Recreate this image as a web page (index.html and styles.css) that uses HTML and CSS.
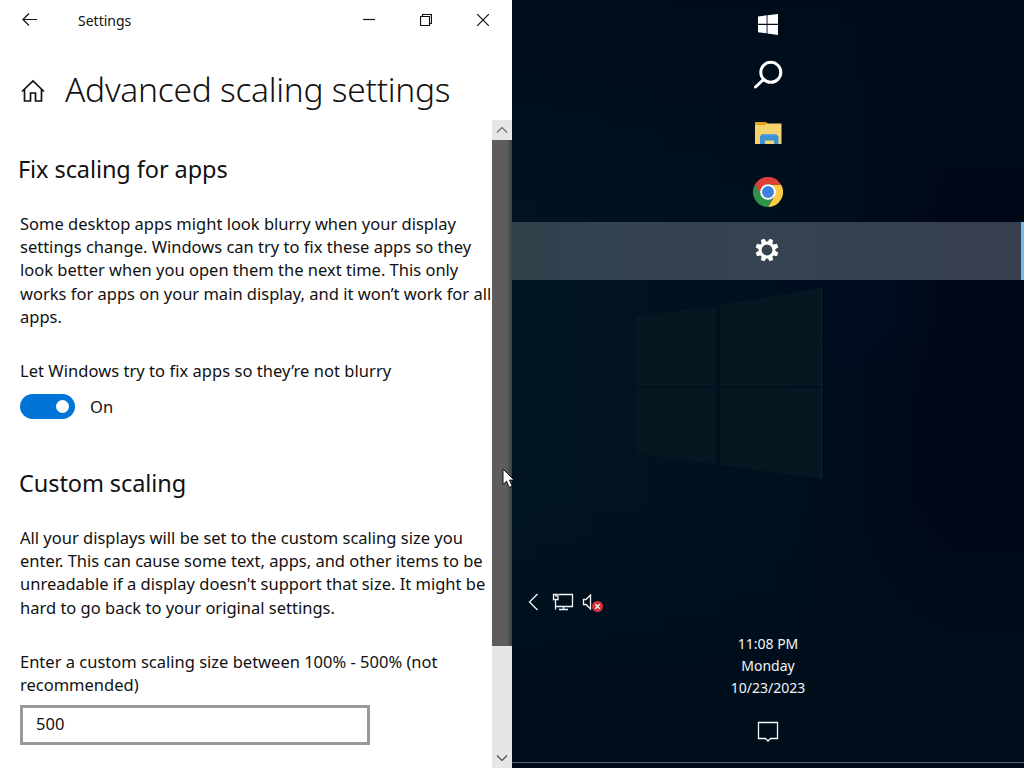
FILE: index.html
```html
<!DOCTYPE html>
<html lang="en">
<head>
<meta charset="utf-8">
<title>Settings</title>
<link rel="stylesheet" href="styles.css">
</head>
<body>
<div class="screen">
  <main class="window">
    <header class="titlebar">
      <svg class="back" width="16" height="14" viewBox="0 0 16 14"><path d="M15 6.500H1M7 .5l-6 6 6 6"/></svg>
      <span class="app-name">Settings</span>
      <div class="controls">
        <svg width="12" height="12" viewBox="0 0 12 12"><path d="M0 5.500h12"/></svg>
        <svg width="12" height="12" viewBox="0 0 12 12"><path d="M.5 2.500h9v9h-9zM2.500 2.500v-2h9v9h-2"/></svg>
        <svg width="12" height="12" viewBox="0 0 12 12"><path d="M0 0l12 12M12 0 0 12"/></svg>
      </div>
    </header>
    <div class="page-head">
      <svg class="home" width="24" height="23" viewBox="0 0 24 23"><path d="M1 12.500 12 2l11 10.500M3.500 10.500V22h6v-8h5v8h6V10.500"/></svg>
      <h1>Advanced scaling settings</h1>
    </div>
    <div class="body">
      <div class="content">
        <h2 class="fix-title">Fix scaling for apps</h2>
        <p class="fix-text">Some desktop apps might look blurry when your display<br>settings change. Windows can try to fix these apps so they<br>look better when you open them the next time. This only<br>works for apps on your main display, and it won’t work for all<br>apps.</p>
        <p class="toggle-label">Let Windows try to fix apps so they’re not blurry</p>
        <div class="toggle-row"><span class="toggle"><span class="knob"></span></span><span class="state">On</span></div>
        <h2 class="custom-title">Custom scaling</h2>
        <p class="custom-text">All your displays will be set to the custom scaling size you<br>enter. This can cause some text, apps, and other items to be<br>unreadable if a display doesn't support that size. It might be<br>hard to go back to your original settings.</p>
        <p class="entry-label">Enter a custom scaling size between 100% - 500% (not<br>recommended)</p>
        <div class="entry">500</div>
      </div>
      <div class="scrollbar">
        <svg width="20" height="20" viewBox="0 0 20 20"><path d="M5 12.500l5-5 5 5"/></svg>
        <div class="thumb"></div>
        <svg class="down" width="20" height="20" viewBox="0 0 20 20"><path d="M5 7.500l5 5 5-5"/></svg>
      </div>
    </div>
  </main>
  <aside class="taskbar">
    <svg class="wallpaper" width="512" height="768" viewBox="0 0 512 768">
      <path class="pane" d="M124 316l80-10v80h-80zM208 305l102-17v98H208zM124 388h80v76l-80-10zM208 388h102v91l-102-14z"/>
      <path class="edge" d="M309.500 288v191"/>
    </svg>
    <div class="item start"><svg width="20" height="21" viewBox="0 0 20 21"><path fill="#fff" d="M0 2.600 8.600 1.300v8.500H0zM9.500 1.200 20 0v9.800H9.500zM0 10.900h8.600v8.400L0 18.200zM9.500 10.900H20V21L9.500 19.500z"/></svg></div>
    <div class="item find"><svg width="30" height="30" viewBox="0 0 30 30" fill="none" stroke="#fff" stroke-width="3"><circle cx="17.800" cy="12.300" r="10"/><path stroke-linecap="round" d="M10.500 19.500 2.500 27"/></svg></div>
    <div class="item files"><svg width="28" height="24" viewBox="0 0 28 24"><path fill="#e3a21b" d="M1 1h11l2 2v4H1z"/><path fill="#f6d36c" d="M1 4h10l2-1.500h14.500V23H1z"/><path fill="#3d91cf" d="M8 13h14l2.500 2.500V23H20v-3.500h-9V23H6v-7.500z"/><path fill="#5ba6da" d="M8 13h14v1.500H8z"/></svg></div>
    <div class="item chrome"><svg width="30" height="30" viewBox="0 0 30 30"><path fill="#2e9149" d="M15 15 2 7.500A15 15 0 0 0 15 30l6.100-11.500z"/><path fill="#fccb45" d="M15 7.500h13A15 15 0 0 1 15 30l6.500-11.200z"/><path fill="#dc4038" d="M2 7.500a15 15 0 0 1 26 0H15a7.500 7.500 0 0 0-6.500 11.300z"/><circle cx="15" cy="15" r="7.800" fill="#fff"/><circle cx="15" cy="15" r="6" fill="#3c80e0"/></svg></div>
    <div class="item active"><svg width="24" height="24" viewBox="-12 -12 24 24"><g fill="#fff" transform="rotate(22.500)"><path id="tooth" d="M-2.700-7-1.900-11.500h3.800l.8 4.500zM-2.700 7l.8 4.500h3.800l.8-4.500z"/><use href="#tooth" transform="rotate(45)"/><use href="#tooth" transform="rotate(90)"/><use href="#tooth" transform="rotate(135)"/></g><circle r="6.900" fill="none" stroke="#fff" stroke-width="3"/></svg></div>
    <div class="tray">
      <svg width="76" height="22" viewBox="0 0 76 22" fill="none" stroke="#f4f7f8" stroke-width="1.300"><path d="M10.500 3 2.500 11l8 8"/><path d="M32 3.500h13.500v12H28M28.500 8.500v10M26.500 3.500h4.500v5h-4.500zM36.500 15.500v3M32 18.500h9M29 4v2"/><path d="M56.500 8.500H59l4.500-4.500v14L59 13.500h-2.500z"/><circle cx="70.500" cy="15.500" r="5.500" fill="#d6323a" stroke="none"/><path d="M68.300 13.300l4.400 4.400M72.700 13.300l-4.400 4.400"/></svg>
    </div>
    <div class="clock"><span>11:08 PM</span><span>Monday</span><span>10/23/2023</span></div>
    <svg class="notice" width="22" height="22" viewBox="0 0 22 22"><path d="M1.500 1.500h19v16h-7L11 20l-2.500-2.500h-7z"/></svg>
  </aside>
  <svg class="cursor" width="14" height="22" viewBox="0 0 14 22"><path d="M1 1v15.500l3.500-3.300 2.700 6.200 3-1.300-2.700-6h4.700z"/></svg>
</div>
</body>
</html>
```

FILE: styles.css
```css
* { box-sizing: border-box; }
body { margin: 0; font-family: "Noto Sans", "Open Sans", sans-serif; color: #111; overflow: hidden; }
svg { display: block; flex: none; }
h1, h2, p { margin: 0; white-space: nowrap; }
.screen { position: relative; display: flex; width: 1024px; height: 768px; }
.window { width: 512px; height: 768px; background: #fff; display: flex; flex-direction: column; }
.titlebar { height: 40px; display: flex; align-items: center; padding: 0 23px 0 22px; }
.titlebar svg, .home { fill: none; stroke: #111; stroke-width: 1.2; }
.app-name { font-size: 14px; margin-left: 40px; }
.controls { display: flex; gap: 45px; margin-left: auto; }
.page-head { height: 80px; display: flex; align-items: center; padding: 21px 0 0 21px; }
.home { stroke-width: 1.7; }
h1 { font-size: 33.500px; font-weight: 300; line-height: 40px; margin: -3px 0 0 20px; letter-spacing: -0.26px; }
.body { flex: 1; display: flex; }
.content { width: 492px; padding: 32px 0 0 20px; }
h2 { font-size: 23.500px; line-height: 34px; font-weight: 400; margin-left: -1px; letter-spacing: -0.08px; }
.content p { font-size: 16.500px; line-height: 23.300px; }
h2.fix-title { margin-left: -2px; }
.fix-text { margin-top: 26px; }
.content .fix-text { line-height: 23.200px; }
.content .toggle-label { margin-top: 31px; letter-spacing: 0.04px; }
.toggle-row { display: flex; align-items: center; margin-top: 11px; height: 26px; }
.toggle { width: 55px; height: 25px; border-radius: 13px; background: #0075d7; display: flex; align-items: center; justify-content: flex-end; padding-right: 6px; }
.knob { width: 13px; height: 13px; border-radius: 50%; background: #fff; }
.state { font-size: 16.500px; margin: 1px 0 0 15px; }
.custom-title { margin-top: 47px; }
.custom-text { margin-top: 25.500px; }
.entry-label { margin-top: 30.500px; }
.entry { width: 350px; height: 40px; margin-top: 9px; border: 3px solid #999; padding-left: 13px; font-size: 16.500px; line-height: 32px; }
.scrollbar { width: 20px; background: #e6e6e6; display: flex; flex-direction: column; }
.scrollbar svg { fill: none; stroke: #777; stroke-width: 1.4; }
.thumb { height: 506px; background: linear-gradient(90deg, #5d5d5d 75%, #34434a); }
.scrollbar .down { margin-top: auto; stroke: #444; stroke-width: 1.1; }
.taskbar { position: relative; width: 512px; height: 768px; color: #f0f5f8; display: flex; flex-direction: column; border-bottom: 5px solid #000b19; background: radial-gradient(circle at 340px 300px, #000c22 0, transparent 110px), linear-gradient(180deg, #000c1a, transparent 270px, transparent 500px, #000e1c 680px), linear-gradient(90deg, #001520, #00101d 55%, #000716 85%); }
.taskbar::after { content: ""; position: absolute; left: 0; right: 0; bottom: 0; height: 1px; background: #536576; }
.wallpaper { position: absolute; inset: 0; }
.pane { fill: #051720; }
.edge { stroke: #10272d; fill: none; }
.item { position: relative; display: flex; align-items: center; justify-content: center; height: 58px; }
.start { height: 49px; }
.find { height: 52px; }
.files { height: 63px; }
.chrome { padding-bottom: 2px; }
.active { background: linear-gradient(90deg, #30414c, #364350 50%, #373e4d); border-right: 3px solid #76b9ed; padding: 0 0 2px 1px; }
.tray { height: 22px; margin: 311px 0 0 15px; }
.clock { margin-top: 20px; display: flex; flex-direction: column; align-items: center; font-size: 14px; line-height: 22px; }
.notice { margin: 22px auto 0; fill: none; stroke: #f4f7f8; stroke-width: 1.3; }
.cursor { position: absolute; left: 502px; top: 468px; fill: #fff; stroke: #111; stroke-width: 1; }
```
